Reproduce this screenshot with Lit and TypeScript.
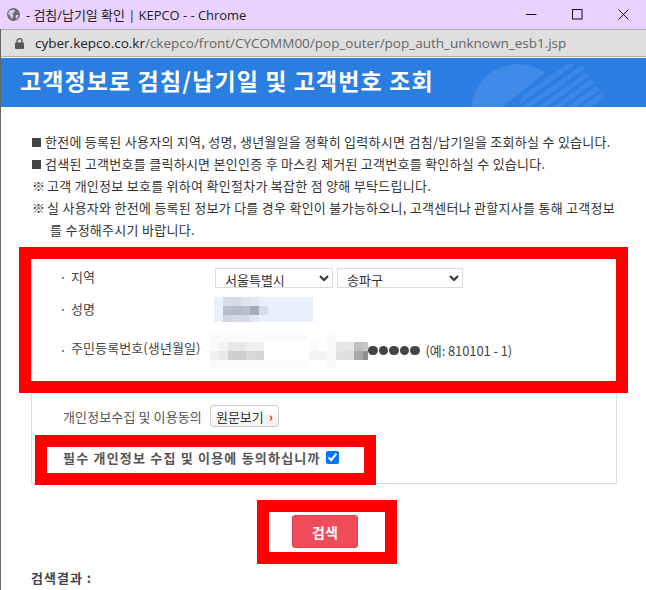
import { LitElement, html, css, svg } from "lit";
import { customElement } from "lit/decorators.js";

const cells = (rows: [number, number, number, number, string][]) =>
  svg`${rows.map(([x, y, w, h, c]) => svg`<rect x=${x} y=${y} width=${w} height=${h} fill=${c}></rect>`)}`;

@customElement("app-root")
export class AppRoot extends LitElement {
  static styles = css`
    :host { display: block; width: 646px; height: 590px; overflow: hidden; position: relative; background: #fff;
      font-family: "Noto Sans CJK KR", "Noto Sans", sans-serif; color: #333; }
    .frame { border-left: 1px solid #666; height: 590px; box-sizing: border-box; }
    .titlebar { height: 29px; margin-left: -1px; background: #e9d2ff; display: flex; align-items: center; padding-left: 7px; font: 13px "Open Sans", "Noto Sans CJK KR", sans-serif; color: #222; }
    .globe { width: 13px; height: 13px; margin-right: 6px; flex: none; }
    .titletext { flex: 1; letter-spacing: -0.05px; }
    .winbtns { display: flex; }
    .winbtn { width: 46px; height: 29px; display: flex; align-items: center; justify-content: center; }
    .addr { height: 28px; background: #dfdfdf; border-top: 1px solid #b5aeb8; border-bottom: 1px solid #b0b0b0; box-sizing: border-box; display: flex; align-items: center; padding-left: 14px; font: 13.5px "Open Sans", sans-serif; color: #666; }
    .addr svg { margin-right: 11px; }
    .addr b { font-weight: 400; color: #222; }
    .head { height: 49px; margin-top: 1px; background: #2a7de1; color: #fff; position: relative; overflow: hidden; padding: 0 0 6px 19px; box-sizing: border-box; display: flex; align-items: center; font-size: 23px; font-weight: 700; letter-spacing: 1.1px; }
    .head svg { position: absolute; left: 460px; top: 0; }
    .notes { margin: 24px 0 0; padding: 0 0 0 31px; list-style: none; font-size: 13px; letter-spacing: 0.27px; color: #333; }
    .notes li { display: flex; min-height: 22px; line-height: 22px; width: 590px; }
    .mk { width: 15px; flex: none; letter-spacing: 0; }
    .sq { width: 9px; height: 9px; background: #444; flex: none; margin: 7px 4px 0 0; }
    .notes .tx { flex: 1; white-space: nowrap; }
    .cont { display: block; margin-left: 3px; }
    .form { margin: 18px 0 0 30px; width: 586px; height: 225px; border: 1px solid #ddd; border-top: none; box-sizing: border-box; position: relative; font-size: 13px; }
    .row { display: flex; align-items: center; padding-left: 30px; }
    .bl { width: 2px; height: 2px; background: #888; margin-right: 7px; flex: none; }
    .lab { width: 144px; flex: none; letter-spacing: .1px; color: #444; position: relative; top: -2px; }
    .r2 .lab { top: -1px; }
    .r3 .lab { top: -3px; }
    .r1 { height: 38px; }
    select { font: 13px "Noto Sans CJK KR", sans-serif; color: #333; height: 20px; border: 1px solid #ddd; background: #fff; padding: 0 0 0 5px; margin: 0 4px 0 0; box-sizing: border-box; border-radius: 0; }
    .s1 { width: 118px; }
    .s2 { width: 126px; }
    .r2 { height: 25px; }
    .name { width: 99px; height: 25px; background: #e8f0fe; margin-left: -1px; display: block; }
    .r3 { height: 35px; margin-top: 11px; }
    .rrn { width: 158px; height: 35px; margin-left: -5px; display: block; flex: none; }
    .dots { display: flex; gap: 1px; }
    .dot { width: 9.5px; height: 9.5px; background: #444; border-radius: 50%; }
    .eg { margin-left: 6px; color: #444; letter-spacing: -0.1px; }
    .r4 { margin-top: 37px; height: 22px; color: #555; letter-spacing: 0.12px; padding-left: 31px; }
    .view { margin-left: 8px; width: 69px; height: 22px; border: 1px solid #ccc; border-radius: 3px; background: linear-gradient(#fff, #f2f2f2); box-sizing: border-box; padding: 0; font: 13px "Noto Sans CJK KR", sans-serif; color: #333; display: flex; align-items: center; justify-content: center; gap: 5px; }
    .view i { color: #d22; font-style: normal; font-weight: 700; font-size: 13px; }
    .r5 { margin-top: 20px; padding-left: 31px; height: 20px; font-weight: 700; color: #555; letter-spacing: 1.2px; display: flex; align-items: center; }
    input[type="checkbox"] { width: 13px; height: 13px; margin: 0 0 0 5px; accent-color: #0075ff; }
    .act { display: flex; justify-content: center; margin: 31px 0 0 0; width: 648px; }
    .go { width: 66px; height: 33px; border: 1px solid #d9434f; border-radius: 3px; background: #ef4b58; color: #fff; font: 700 14px "Noto Sans CJK KR", sans-serif; padding: 0; }
    .res { margin: 20px 0 0 30px; font-size: 13px; font-weight: 700; letter-spacing: 1px; color: #444; }
    .red { position: absolute; border: 12px solid #f00; box-sizing: border-box; pointer-events: none; }
    .b1 { left: 19px; top: 247px; width: 609px; height: 146px; }
    .b2 { left: 35px; top: 435px; width: 341px; height: 50px; }
    .b3 { left: 257px; top: 500px; width: 140px; height: 64px; }
  `;

  render() {
    return html`
      <div class="frame">
        <div class="titlebar">
          <svg class="globe" viewBox="0 0 13 13"><circle cx="6.5" cy="6.5" r="6.5" fill="#6f6a75"></circle><path d="M3 2.2 7 1.5 8 3.5 5.5 5.5 6.5 8 4.5 11 3 8 1 5.5Z M9 7h2.6L10 11 8.5 9.5Z" fill="#d9cbe6"></path></svg>
          <span class="titletext">- 검침/납기일 확인 | KEPCO - - Chrome</span>
          <div class="winbtns">
            <div class="winbtn"><svg width="11" height="11" viewBox="0 0 11 11"><path d="M0 5.5H10.5" stroke="#111"></path></svg></div>
            <div class="winbtn"><svg width="11" height="11" viewBox="0 0 11 11"><rect x=".5" y=".5" width="9.5" height="9.5" fill="none" stroke="#111"></rect></svg></div>
            <div class="winbtn"><svg width="11" height="11" viewBox="0 0 11 11"><path d="M.5.5 10.5 10.5M10.5.5.5 10.5" stroke="#111"></path></svg></div>
          </div>
        </div>
        <div class="addr">
          <svg width="9" height="11" viewBox="0 0 9 11"><path d="M2 5V3.2a2.5 2.5 0 0 1 5 0V5" fill="none" stroke="#555" stroke-width="1.3"></path><rect y="4.5" width="9" height="6.5" rx="1" fill="#555"></rect></svg>
          <span><b>cyber.kepco.co.kr</b>/ckepco/front/CYCOMM00/pop_outer/pop_auth_unknown_esb1.jsp</span>
        </div>
        <div class="head">
          <svg width="186" height="49" viewBox="0 0 186 49">
            <defs>
              <clipPath id="lobeL"><path d="M0 0H85V14L42 49H0Z"></path></clipPath>
              <clipPath id="lobeR"><circle cx="110" cy="59" r="53"></circle></clipPath>
            </defs>
            <circle cx="57" cy="53" r="47" fill="#3f8ae6" clip-path="url(#lobeL)"></circle>
            <g clip-path="url(#lobeR)" stroke="#3a87e5" stroke-width="5.5" fill="none">
              <path d="M116 2 46 52M122 9 52 59M127 16 57 66M132 23 62 73M137 30 67 80M142 37 72 87"></path>
            </g>
          </svg>
          고객정보로 검침/납기일 및 고객번호 조회
        </div>
        <ul class="notes">
          <li><span class="sq"></span><span class="tx">한전에 등록된 사용자의 지역, 성명, 생년월일을 정확히 입력하시면 검침/납기일을 조회하실 수 있습니다.</span></li>
          <li><span class="sq"></span><span class="tx">검색된 고객번호를 클릭하시면 본인인증 후 마스킹 제거된 고객번호를 확인하실 수 있습니다.</span></li>
          <li><span class="mk">※</span><span class="tx">고객 개인정보 보호를 위하여 확인절차가 복잡한 점 양해 부탁드립니다.</span></li>
          <li><span class="mk">※</span><span class="tx">실 사용자와 한전에 등록된 정보가 다를 경우 확인이 불가능하오니, 고객센터나 관할지사를 통해 고객정보<span class="cont">를 수정해주시기 바랍니다.</span></span></li>
        </ul>
        <div class="form">
          <div class="row r1"><span class="bl"></span><span class="lab">지역</span>
            <select class="s1"><option>서울특별시</option></select><select class="s2"><option>송파구</option></select></div>
          <div class="row r2"><span class="bl"></span><span class="lab">성명</span>
            <svg class="name" viewBox="0 0 99 25">${cells([[9,0,9,9,"#d8deea"],[18,0,9,9,"#d4dae6"],[27,0,9,9,"#dce2ee"],[36,0,9,9,"#e0e6f2"],[9,9,9,9,"#b8bfcc"],[18,9,9,9,"#b4bbc8"],[27,9,9,9,"#b8bfcc"],[36,9,9,9,"#a4acba"],[45,9,9,9,"#d8deea"],[9,18,9,7,"#d0d6e2"],[18,18,9,7,"#d4dae6"],[27,18,9,7,"#d4dae6"],[36,18,9,7,"#e0e6f2"]])}</svg></div>
          <div class="row r3"><span class="bl"></span><span class="lab">주민등록번호(생년월일)</span>
            <svg class="rrn" viewBox="0 0 158 35">${cells([[0,0,98,9,"#fbfbfb"],[0,9,9,9,"#fafafa"],[9,9,9,9,"#f3f3f3"],[18,9,18,9,"#e8e8e8"],[36,9,18,9,"#f0f0f0"],[0,18,9,9,"#efefef"],[9,18,9,9,"#e8e8e8"],[18,18,18,9,"#cfcfcf"],[36,18,9,9,"#dadada"],[45,18,9,9,"#d6d6d6"],[0,27,98,8,"#fbfbfb"],[99,9,9,9,"#fafafa"],[99,18,27,9,"#f4f4f4"],[117,0,9,35,"#fafafa"],[126,9,18,9,"#e6e6e6"],[126,18,9,9,"#e2e2e2"],[135,18,9,9,"#dfdfdf"],[144,9,9,9,"#bfbfbf"],[153,9,5,9,"#c8c8c8"],[144,18,9,9,"#a8a8a8"],[153,18,5,9,"#8f8f8f"]])}</svg>
            <span class="dots"><span class="dot"></span><span class="dot"></span><span class="dot"></span><span class="dot"></span><span class="dot"></span></span>
            <span class="eg">(예: 810101 - 1)</span></div>
          <div class="row r4">개인정보수집 및 이용동의<button class="view">원문보기 <i>›</i></button></div>
          <label class="r5">필수 개인정보 수집 및 이용에 동의하십니까<input type="checkbox" checked /></label>
        </div>
        <div class="act"><button class="go">검색</button></div>
        <div class="res">검색결과 :</div>
      </div>
      <div class="red b1"></div><div class="red b2"></div><div class="red b3"></div>
    `;
  }
}
